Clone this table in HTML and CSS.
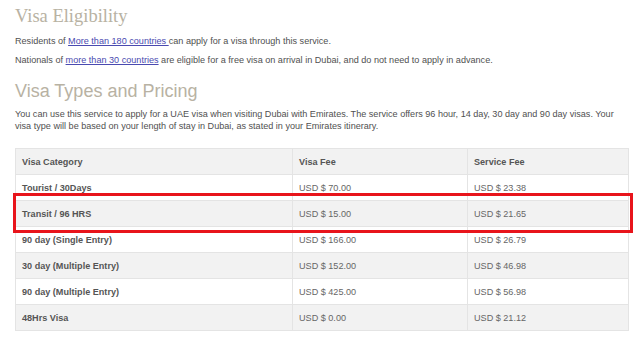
FILE: index.html
```html
<!DOCTYPE html>
<html>
<head>
<title>Visa Eligibility</title>
<link rel="stylesheet" href="styles.css">
</head>
<body>
<div class="page">

<h2 class="title-serif">Visa Eligibility</h2>

<p>Residents of <a href="#">More than 180 countries </a>can apply for a visa through this service.</p>

<p>Nationals of <a href="#">more than 30 countries</a> are eligible for a free visa on arrival in Dubai, and do not need to apply in advance.</p>

<h2 class="title-sans">Visa Types and Pricing</h2>

<p class="intro">You can use this service to apply for a UAE visa when visiting Dubai with Emirates. The service offers 96 hour, 14 day, 30 day and 90 day visas. Your visa type will be based on your length of stay in Dubai, as stated in your Emirates itinerary.</p>

<div class="table-wrap">
<table class="pricing">
<tr><th class="c1">Visa Category</th><th class="c2">Visa Fee</th><th class="c3">Service Fee</th></tr>
<tr><td class="cat">Tourist / 30Days</td><td>USD $ 70.00</td><td>USD $ 23.38</td></tr>
<tr><td class="cat">Transit / 96 HRS</td><td>USD $ 15.00</td><td>USD $ 21.65</td></tr>
<tr><td class="cat">90 day (Single Entry)</td><td>USD $ 166.00</td><td>USD $ 26.79</td></tr>
<tr><td class="cat">30 day (Multiple Entry)</td><td>USD $ 152.00</td><td>USD $ 46.98</td></tr>
<tr><td class="cat">90 day (Multiple Entry)</td><td>USD $ 425.00</td><td>USD $ 56.98</td></tr>
<tr><td class="cat">48Hrs Visa</td><td>USD $ 0.00</td><td>USD $ 21.12</td></tr>
</table>
<div class="highlight"></div>
</div>

</div>
</body>
</html>
```

FILE: styles.css
```css
/* Visa eligibility page */

body
{ margin: 0;
background-color: #ffffff;
font-family: "Liberation Sans", Arial, sans-serif;
color: #505050;
}

div.page
{ padding: 0 11px 0 15px;
}

h2.title-serif
{ margin: 0;
padding-top: 4px;
font-family: "Liberation Serif", "Times New Roman", serif;
font-weight: normal;
font-size: 18.5px;
line-height: 24px;
color: #b8b2a3;
}

h2.title-sans
{ margin: 14px 0 0 0;
font-weight: normal;
font-size: 18px;
line-height: 22px;
color: #b8b2a3;
}

p
{ margin: 7px 0 0 0;
font-size: 9.1px;
line-height: 12px;
}

p + p
{ margin-top: 7px;
}

p.intro
{ margin-top: 6px;
}

a
{ color: #4a4ab0;
}

/* Table */

div.table-wrap
{ position: relative;
margin-top: 16px;
}

table.pricing
{ width: 614px;
border-collapse: collapse;
border: 1px solid #e4e4e4;
font-size: 9.1px;
}

table.pricing th,
table.pricing td
{ height: 25px;
padding: 0 6px;
border-top: 1px solid #e4e4e4;
border-left: 1px solid #e4e4e4;
text-align: left;
color: #666666;
}

table.pricing th
{ font-weight: bold;
color: #555555;
}

table.pricing td.cat
{ font-weight: bold;
color: #555555;
}

table.pricing tr:nth-child(odd)
{ background-color: #f2f2f2;
}

th.c1 { width: 264px; }
th.c2 { width: 162px; }

/* Annotation box drawn over the transit row */

div.highlight
{ position: absolute;
left: -2px;
top: 45px;
width: 614px;
height: 34px;
border: 3px solid #e8141b;
}
```
